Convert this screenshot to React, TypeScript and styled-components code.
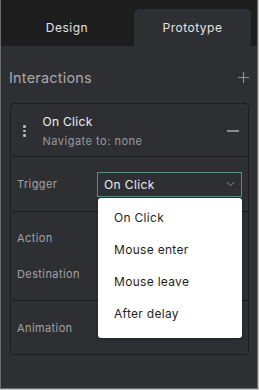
import React from 'react';
import styled, { createGlobalStyle } from 'styled-components';

const GlobalStyle = createGlobalStyle`
  html, body {
    margin: 0;
    padding: 0;
    background: #c9c9c9;
  }
  * {
    box-sizing: border-box;
  }
`;

const Frame = styled.div`
  width: 258px;
  height: 389px;
  border: 1px solid #6c6c6c;
  border-top: none;
  background: #2e2f33;
  font-family: Inter, 'Open Sans', sans-serif;
  display: flex;
  flex-direction: column;
  overflow: hidden;
`;

const TabBar = styled.div`
  height: 46px;
  background: #1d1d1d;
  display: flex;
  align-items: flex-end;
  margin-left: -1px;
`;

const Tab = styled.div<{ $active?: boolean; $w: number }>`
  width: ${(p) => p.$w}px;
  height: 37px;
  display: flex;
  align-items: center;
  justify-content: center;
  padding-bottom: 1px;
  font-size: 12px;
  letter-spacing: 0.5px;
  color: #e4e4e4;
  background: ${(p) => (p.$active ? '#2e2f33' : 'transparent')};
  border-radius: ${(p) => (p.$active ? '5px 5px 0 0' : '0')};
`;

const Body = styled.div`
  flex: 1;
  padding: 0 8px 0 9px;
  display: flex;
  flex-direction: column;
`;

const SectionHead = styled.div`
  height: 57px;
  display: flex;
  align-items: center;
  justify-content: space-between;
  padding-top: 6px;
`;

const SectionTitle = styled.div`
  font-size: 14.5px;
  color: #a9a9ab;
  letter-spacing: 0.2px;
  margin-left: -1px;
`;

const PlusIcon = styled.svg`
  width: 11px;
  height: 11px;
  margin-right: 0;
`;

const Card = styled.div`
  border: 1px solid #1c1d20;
  border-radius: 4px;
  position: relative;
`;

const CardHead = styled.div`
  height: 53px;
  display: flex;
  align-items: center;
  border-bottom: 1px solid #1c1d20;
  padding: 0 9px 0 12px;
`;

const Dots = styled.div`
  display: flex;
  flex-direction: column;
  gap: 2px;
  margin-right: 17px;
  margin-top: 2px;

  span {
    width: 2.5px;
    height: 2.5px;
    border-radius: 50%;
    background: #bdbdbd;
  }
`;

const HeadText = styled.div`
  flex: 1;
  display: flex;
  flex-direction: column;
  gap: 5px;
  margin-top: 1px;
`;

const HeadTitle = styled.div`
  font-size: 12px;
  color: #f0f0f0;
  letter-spacing: 0.3px;
`;

const HeadSub = styled.div`
  font-size: 11px;
  color: #9a9a9c;
  letter-spacing: 0.5px;
`;

const Minus = styled.div`
  width: 12px;
  height: 2px;
  background: #8c8c8e;
  margin-top: 2px;
`;

const Row = styled.div<{ $h: number; $last?: boolean }>`
  height: ${(p) => p.$h}px;
  display: flex;
  align-items: center;
  padding: 0 6px 0 6px;
  border-bottom: ${(p) => (p.$last ? 'none' : '1px solid #1c1d20')};
`;

const Stack = styled.div<{ $h: number }>`
  height: ${(p) => p.$h}px;
  display: flex;
  flex-direction: column;
  justify-content: center;
  gap: 22px;
  padding: 0 6px;
  border-bottom: 1px solid #1c1d20;
`;

const Label = styled.div`
  width: 80px;
  font-size: 11px;
  color: #a2a2a4;
  letter-spacing: 0.4px;
`;

const Select = styled.div`
  width: 145px;
  height: 25px;
  border: 1px solid #3a9e80;
  display: flex;
  align-items: center;
  justify-content: space-between;
  padding: 0 6px 0 6px;
  font-size: 12px;
  color: #ececec;
  letter-spacing: 0.4px;
`;

const Chevron = styled.svg`
  width: 9px;
  height: 6px;
`;

const Menu = styled.div`
  position: absolute;
  left: 87px;
  top: 94px;
  width: 144px;
  height: 140px;
  background: #ffffff;
  border-radius: 3px;
  padding: 3px 0 0 16px;
  display: flex;
  flex-direction: column;
  box-shadow: 0 1px 3px rgba(0, 0, 0, 0.3);
`;

const MenuItem = styled.div`
  height: 32px;
  display: flex;
  align-items: center;
  font-size: 12px;
  color: #1f1f1f;
  letter-spacing: 0.3px;
`;

const options = ['On Click', 'Mouse enter', 'Mouse leave', 'After delay'];

export default function App() {
  return (
    <>
      <GlobalStyle />
      <Frame>
        <TabBar>
          <Tab $w={134}>Design</Tab>
          <Tab $w={117} $active>
            Prototype
          </Tab>
        </TabBar>
        <Body>
          <SectionHead>
            <SectionTitle>Interactions</SectionTitle>
            <PlusIcon viewBox="0 0 11 11">
              <path d="M5.5 0v11M0 5.5h11" stroke="#8e8e90" strokeWidth="1.2" />
            </PlusIcon>
          </SectionHead>
          <Card>
            <CardHead>
              <Dots>
                <span />
                <span />
                <span />
              </Dots>
              <HeadText>
                <HeadTitle>On Click</HeadTitle>
                <HeadSub>Navigate to: none</HeadSub>
              </HeadText>
              <Minus />
            </CardHead>
            <Row $h={55}>
              <Label>Trigger</Label>
              <Select>
                On Click
                <Chevron viewBox="0 0 9 6">
                  <path d="M0.5 0.8L4.5 4.8L8.5 0.8" fill="none" stroke="#8a8a8c" strokeWidth="1" />
                </Chevron>
              </Select>
            </Row>
            <Stack $h={89}>
              <Label>Action</Label>
              <Label>Destination</Label>
            </Stack>
            <Row $h={53} $last>
              <Label>Animation</Label>
            </Row>
            <Menu>
              {options.map((o) => (
                <MenuItem key={o}>{o}</MenuItem>
              ))}
            </Menu>
          </Card>
        </Body>
      </Frame>
    </>
  );
}
